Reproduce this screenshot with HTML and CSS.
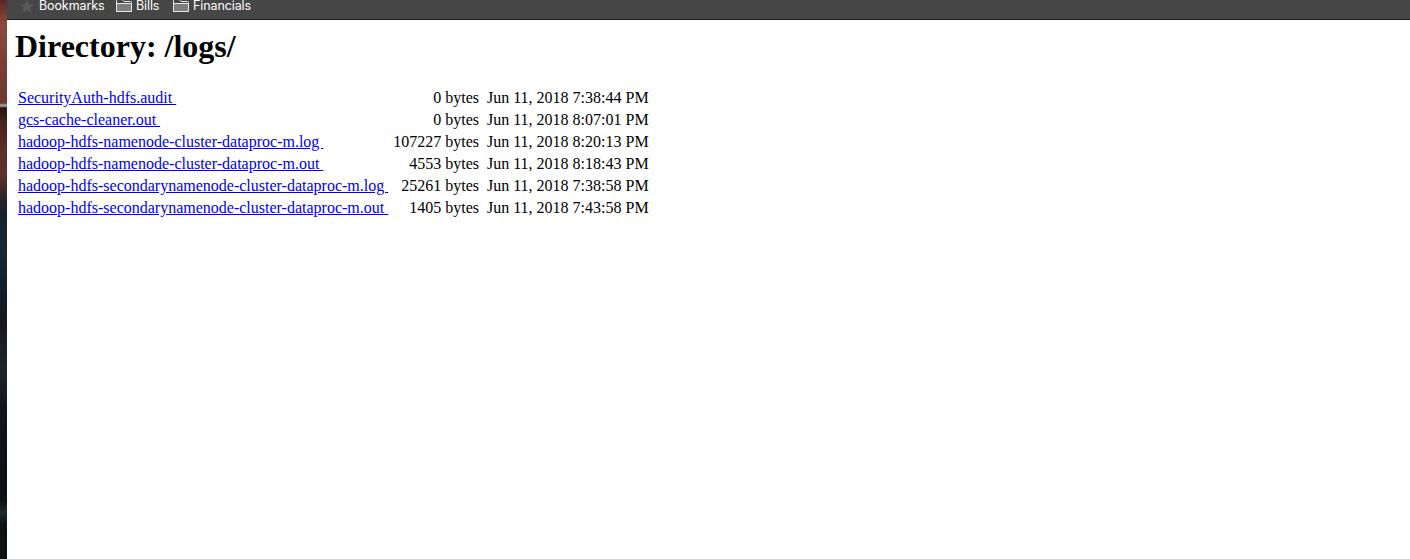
FILE: index.html
```html
<!DOCTYPE html>
<html lang="en">
<head>
<meta charset="utf-8">
<title>Directory: /logs/</title>
<link rel="stylesheet" href="styles.css">
</head>
<body>
<div class="desktop"></div>
<div class="window">
  <nav class="bookmarks">
    <span class="bookmark bookmark-main"><svg class="star" width="14" height="14" viewBox="0 0 14 14"><path d="M7 -.7L8.900 4.300 14 4.500 10 7.800 11.400 13 7 10 2.600 13 4 7.800 0 4.500 5.100 4.300z"/></svg><span class="label label-main">Bookmarks</span></span>
    <span class="bookmark"><svg class="folder" width="16" height="14" viewBox="0 0 16 14"><path class="folder-back" d="M.5 13.5V2.5Q.5 1.5 1.5 1.5H6L8 3.500H14.5Q15.500 3.500 15.500 4.500V13.5z"/><path class="folder-front" d="M.5 5.500H15.500V13.500H.5z"/></svg><span class="label label-bills">Bills</span></span>
    <span class="bookmark"><svg class="folder" width="16" height="14" viewBox="0 0 16 14"><path class="folder-back" d="M.5 13.5V2.5Q.5 1.5 1.5 1.5H6L8 3.500H14.5Q15.500 3.500 15.500 4.500V13.5z"/><path class="folder-front" d="M.5 5.500H15.500V13.500H.5z"/></svg><span class="label label-financials">Financials</span></span>
  </nav>
  <main class="page">
    <h1 class="title">Directory: /logs/</h1>
    <table class="listing">
      <tr><td class="name"><a href="#">SecurityAuth-hdfs.audit&nbsp;</a></td><td class="size">0 bytes&nbsp;</td><td class="date">Jun 11, 2018 7:38:44 PM</td></tr>
      <tr><td class="name"><a href="#">gcs-cache-cleaner.out&nbsp;</a></td><td class="size">0 bytes&nbsp;</td><td class="date">Jun 11, 2018 8:07:01 PM</td></tr>
      <tr><td class="name"><a href="#">hadoop-hdfs-namenode-cluster-dataproc-m.log&nbsp;</a></td><td class="size">107227 bytes&nbsp;</td><td class="date">Jun 11, 2018 8:20:13 PM</td></tr>
      <tr><td class="name"><a href="#">hadoop-hdfs-namenode-cluster-dataproc-m.out&nbsp;</a></td><td class="size">4553 bytes&nbsp;</td><td class="date">Jun 11, 2018 8:18:43 PM</td></tr>
      <tr><td class="name"><a href="#">hadoop-hdfs-secondarynamenode-cluster-dataproc-m.log&nbsp;</a></td><td class="size">25261 bytes&nbsp;</td><td class="date">Jun 11, 2018 7:38:58 PM</td></tr>
      <tr><td class="name"><a href="#">hadoop-hdfs-secondarynamenode-cluster-dataproc-m.out&nbsp;</a></td><td class="size">1405 bytes&nbsp;</td><td class="date">Jun 11, 2018 7:43:58 PM</td></tr>
    </table>
  </main>
</div>
</body>
</html>
```
FILE: styles.css
```css
body {
  margin: 0;
  display: flex;
  height: 559px;
  overflow: hidden;
  background: #fff;
  font-family: "Liberation Serif", "Times New Roman", serif;
}
.desktop {
  flex: 0 0 7px;
  background: linear-gradient(#5a2a28 0, #8a4a40 25px, #7a4036 60px, #6b3830 103px, #a09a98 105px, #a09a98 106px, #2a1512 108px, #472420 125px, #5a3028 150px, #5a3430 175px, #30252b 195px, #16222e 215px, #172836 245px, #101e2d 290px, #17171f 320px, #20242f 370px, #11151c 410px, #0c1215 450px, #0b1113 500px, #1d2a2d 513px, #0c1112 525px, #101211 559px);
}
.window {
  flex: 1;
}
.bookmarks {
  box-sizing: border-box;
  display: flex;
  height: 20px;
  padding-left: 13px;
  background: #464646;
  border-bottom: 1px solid #231c23;
}
.bookmark {
  display: flex;
  margin-right: 12px;
}
.bookmark-main {
  margin-right: 13px;
}
.star {
  fill: #5a5a5a;
  margin-right: 5px;
}
.folder {
  margin: -2px 4px 0 0;
  stroke: #e8e8e8;
  stroke-width: 1;
}
.folder-back {
  fill: #464646;
}
.folder-front {
  fill: #7d7d7d;
}
.label {
  height: 12px;
  font: 400 12.5px/12px Inter, sans-serif;
  letter-spacing: -0.1px;
  white-space: nowrap;
  color: #fff;
}
.label-main {
  width: 64px;
}
.label-bills {
  width: 25px;
}
.page {
  padding: 8px;
}
.title {
  margin: 0 0 21px;
  font-size: 32px;
  line-height: 37px;
}
.listing {
  border-spacing: 2px;
  font-size: 16px;
  line-height: 18px;
}
.listing td {
  padding: 1px;
  white-space: nowrap;
}
.listing .name {
  padding-right: 2px;
}
.listing a {
  color: #0000ee;
}
.size {
  text-align: right;
}
```
